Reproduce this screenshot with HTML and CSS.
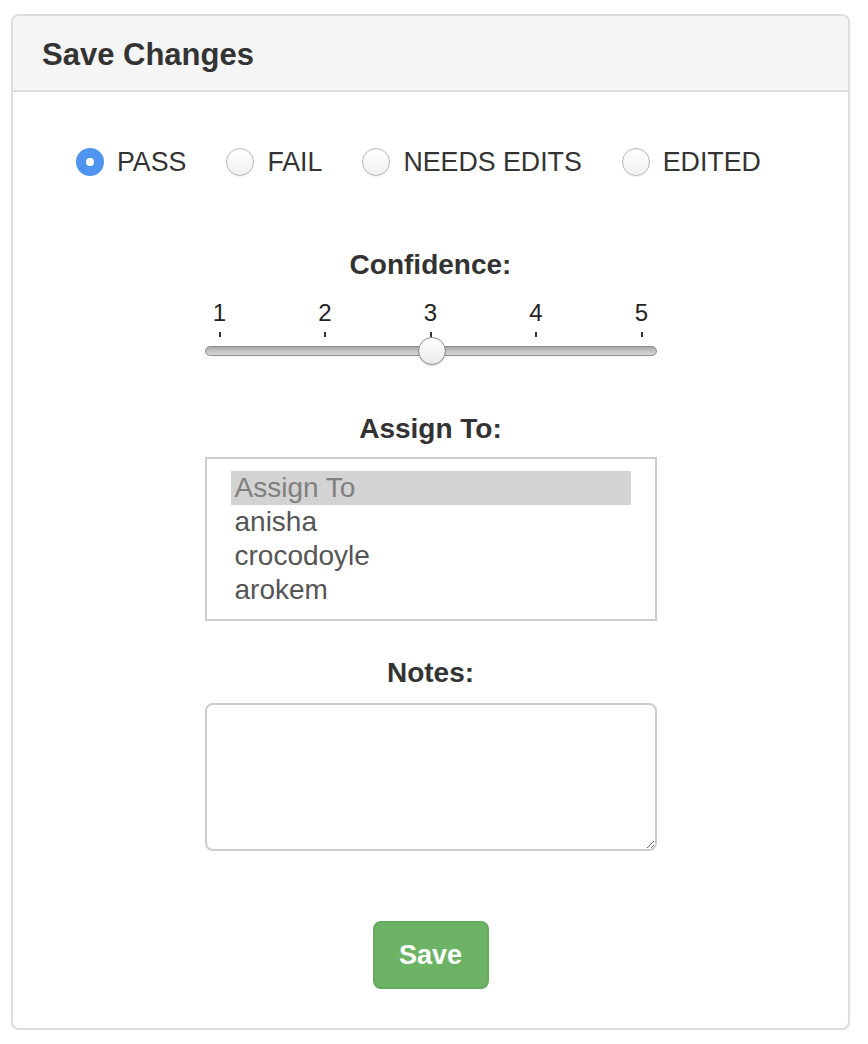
FILE: index.html
```html
<!DOCTYPE html>
<html lang="en">
<head>
<meta charset="utf-8">
<title>Save Changes</title>
<link rel="stylesheet" href="styles.css">
</head>
<body>
<div class="panel">
  <div class="panel-heading">
    <h3 class="panel-title">Save Changes</h3>
  </div>
  <div class="panel-body">
    <div class="radios">
      <label class="radio-item"><input type="radio" name="status" checked><span>PASS</span></label>
      <label class="radio-item"><input type="radio" name="status"><span>FAIL</span></label>
      <label class="radio-item"><input type="radio" name="status"><span>NEEDS EDITS</span></label>
      <label class="radio-item"><input type="radio" name="status"><span>EDITED</span></label>
    </div>

    <div class="field field-confidence">
      <div class="field-label">Confidence:</div>
      <div class="slider">
        <div class="scale">
          <div class="mark"><span class="num">1</span><span class="tick"></span></div>
          <div class="mark"><span class="num">2</span><span class="tick"></span></div>
          <div class="mark"><span class="num">3</span><span class="tick"></span></div>
          <div class="mark"><span class="num">4</span><span class="tick"></span></div>
          <div class="mark"><span class="num">5</span><span class="tick"></span></div>
        </div>
        <div class="track"><span class="thumb"></span></div>
      </div>
    </div>

    <div class="field field-assign">
      <div class="field-label">Assign To:</div>
      <div class="listbox" role="listbox">
        <div class="option selected">Assign To</div>
        <div class="option">anisha</div>
        <div class="option">crocodoyle</div>
        <div class="option">arokem</div>
      </div>
    </div>

    <div class="field field-notes">
      <div class="field-label">Notes:</div>
      <textarea class="notes"></textarea>
    </div>

    <div class="actions">
      <button class="btn-save" type="button">Save</button>
    </div>
  </div>
</div>
</body>
</html>
```

FILE: styles.css
```css
* { box-sizing: border-box; }

html, body {
  margin: 0;
  background: #ffffff;
}

body {
  padding: 14px 18px 0 11px;
  font-family: "Liberation Sans", Arial, Helvetica, sans-serif;
  color: #333333;
}

.panel {
  border: 2px solid #dddddd;
  border-radius: 8px;
  background: #ffffff;
  box-shadow: 0 1px 2px rgba(0, 0, 0, 0.05);
}

.panel-heading {
  background: #f5f5f5;
  border-bottom: 2px solid #dddddd;
  border-radius: 6px 6px 0 0;
  padding: 22px 29px 18px 29px;
}

.panel-title {
  margin: 0;
  font-size: 31px;
  line-height: 34px;
  font-weight: bold;
  color: #333333;
}

.panel-body {
  padding: 50px 0 39px 0;
}

.radios {
  display: flex;
  align-items: center;
  padding-left: 63px;
  height: 40px;
  gap: 40px;
}

.radio-item {
  display: flex;
  align-items: center;
  gap: 13px;
  font-size: 26.75px;
  line-height: 40px;
  color: #333333;
}

.radio-item input {
  -webkit-appearance: none;
  appearance: none;
  margin: 0;
  width: 28px;
  height: 28px;
  border-radius: 50%;
  border: 1px solid #b5b5b5;
  background: linear-gradient(#ffffff, #f1f1f1);
  box-shadow: inset 0 1px 1px rgba(255,255,255,0.8), 0 1px 1px rgba(0,0,0,0.06);
  position: relative;
  flex: none;
}

.radio-item input:checked {
  border: none;
  background: #4f94ef;
  box-shadow: none;
}

.radio-item input:checked::after {
  content: "";
  position: absolute;
  left: 10px;
  top: 10px;
  width: 8px;
  height: 8px;
  border-radius: 50%;
  background: #ffffff;
}

.field {
  display: flex;
  flex-direction: column;
  align-items: center;
}

.field-label {
  font-size: 28px;
  line-height: 40px;
  font-weight: bold;
  color: #333333;
}

.field-confidence { margin-top: 63px; }
.field-assign { margin-top: 53px; }
.field-notes { margin-top: 32px; }

.slider {
  width: 452px;
  margin-top: 16px;
}

.scale {
  display: flex;
  justify-content: space-between;
  padding: 0 15px;
}

.mark {
  width: 0;
  display: flex;
  flex-direction: column;
  align-items: center;
}

.num {
  font-size: 24px;
  line-height: 24px;
  color: #222222;
}

.tick {
  display: block;
  width: 2px;
  height: 5px;
  margin-top: 7px;
  background: #333333;
}

.track {
  position: relative;
  margin-top: 9px;
  height: 10px;
  border-radius: 5px;
  border: 1px solid #8e8e8e;
  background: linear-gradient(#a9a9a9, #c9c9c9 60%, #d6d6d6);
}

.thumb {
  position: absolute;
  left: 212px;
  top: -10px;
  width: 28px;
  height: 28px;
  border-radius: 50%;
  border: 1px solid #8a8a8a;
  background: linear-gradient(#ffffff, #e9e9e9);
  box-shadow: 0 1px 1px rgba(0,0,0,0.15);
}

.listbox {
  margin-top: 8px;
  width: 452px;
  height: 164px;
  border: 2px solid #cccccc;
  padding: 12px 24px;
  background: #ffffff;
}

.option {
  height: 34px;
  line-height: 34px;
  padding-left: 4px;
  font-size: 28px;
  color: #555555;
}

.option.selected {
  background: #d3d3d3;
  color: #808080;
}

.notes {
  display: block;
  margin-top: 10px;
  width: 452px;
  height: 148px;
  border: 2px solid #cccccc;
  border-radius: 8px;
  background: #ffffff;
  font-family: "Liberation Sans", Arial, sans-serif;
  font-size: 28px;
  resize: both;
  outline: none;
}

.actions {
  display: flex;
  justify-content: center;
  margin-top: 70px;
}

.btn-save {
  width: 116px;
  height: 68px;
  border: 2px solid #64a95c;
  border-radius: 8px;
  background: #6db365;
  color: #ffffff;
  font-family: "Liberation Sans", Arial, sans-serif;
  font-size: 27px;
  font-weight: bold;
  padding: 0;
}
```
